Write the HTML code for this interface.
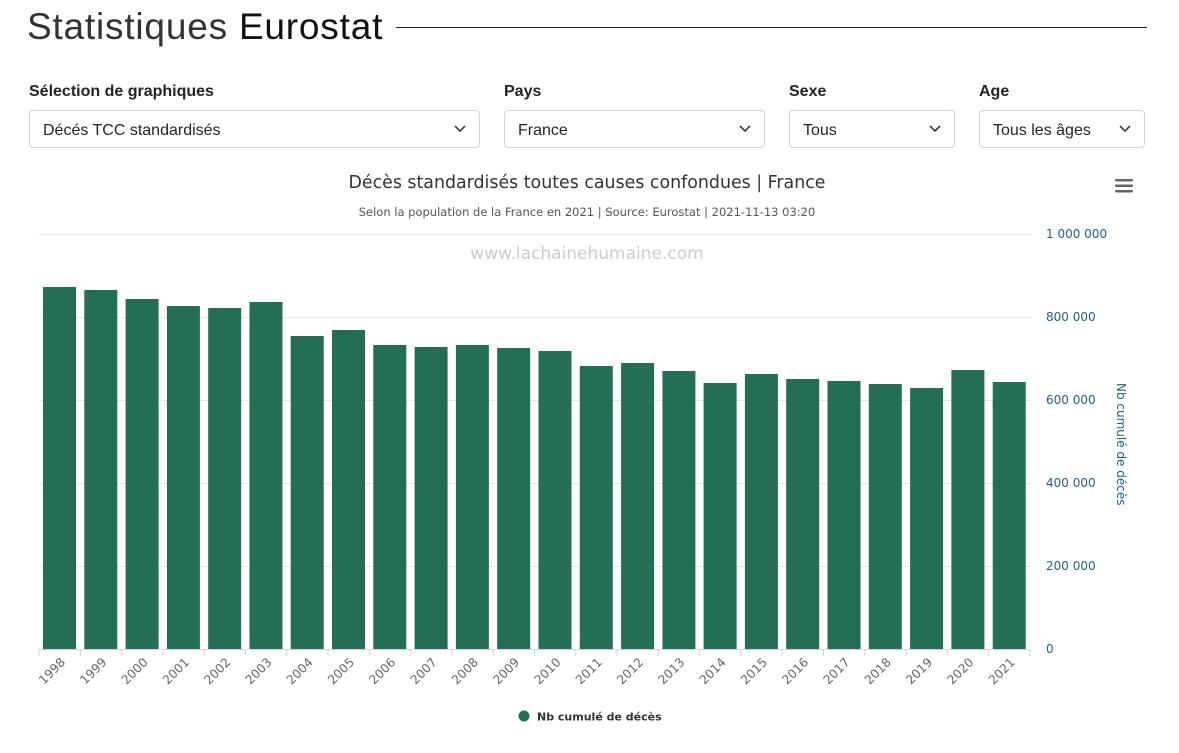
<!DOCTYPE html>
<html><head><meta charset="utf-8"><style>
body{margin:0;width:1179px;height:753px;background:#fff;font-family:"Liberation Sans",sans-serif;position:relative;overflow:hidden}
.h1{position:absolute;left:27px;top:6px;font-size:37px;color:#333;font-weight:300;letter-spacing:0.8px;white-space:nowrap}
.h1 b{font-weight:400;color:#111}
.line{position:absolute;left:396px;top:27px;width:751px;height:1px;background:#222}
.lbl{position:absolute;top:83px;font-size:16px;font-weight:bold;color:#212529}
.sel{position:absolute;top:110px;border:1px solid #ced4da;border-radius:4px;box-sizing:border-box;height:38px;font-size:16px;color:#212529;padding:11px 0 0 13px}
.sel svg{position:absolute;right:13px;top:14px}
</style></head><body>
<div class="h1">Statistiques <b>Eurostat</b></div>
<div class="line"></div>
<div class="lbl" style="left:29px">Sélection de graphiques</div>
<div class="lbl" style="left:504px">Pays</div>
<div class="lbl" style="left:789px">Sexe</div>
<div class="lbl" style="left:979px">Age</div>
<div class="sel" style="left:29px;width:451px">Décés TCC standardisés<svg width="12" height="8"><path d="M1 1l5 5 5-5" stroke="#343a40" stroke-width="1.6" fill="none"/></svg></div>
<div class="sel" style="left:504px;width:261px">France<svg width="12" height="8"><path d="M1 1l5 5 5-5" stroke="#343a40" stroke-width="1.6" fill="none"/></svg></div>
<div class="sel" style="left:789px;width:166px">Tous<svg width="12" height="8"><path d="M1 1l5 5 5-5" stroke="#343a40" stroke-width="1.6" fill="none"/></svg></div>
<div class="sel" style="left:979px;width:166px">Tous les âges<svg width="12" height="8"><path d="M1 1l5 5 5-5" stroke="#343a40" stroke-width="1.6" fill="none"/></svg></div>
<svg width="1179" height="753" style="position:absolute;left:0;top:0" font-family="DejaVu Sans, sans-serif">
<text x="587" y="188" text-anchor="middle" font-size="17.4" fill="#333">Décès standardisés toutes causes confondues | France</text>
<text x="587" y="216" text-anchor="middle" font-size="11.5" fill="#555">Selon la population de la France en 2021 | Source: Eurostat | 2021-11-13 03:20</text>
<g fill="#666"><rect x="1115" y="179" width="18" height="2.5" rx="1"/><rect x="1115" y="184.5" width="18" height="2.5" rx="1"/><rect x="1115" y="190" width="18" height="2.5" rx="1"/></g>
<g stroke="#e6e6e6"><line x1="39" x2="1030" y1="234.5" y2="234.5"/><line x1="39" x2="1030" y1="317.5" y2="317.5"/><line x1="39" x2="1030" y1="400.5" y2="400.5"/><line x1="39" x2="1030" y1="483.5" y2="483.5"/><line x1="39" x2="1030" y1="566.5" y2="566.5"/></g>
<text x="587" y="259" text-anchor="middle" font-size="17" fill="#ccc">www.lachainehumaine.com</text>
<g fill="#236e55">
<rect x="43" y="287" width="33" height="362"/><rect x="84.3" y="290" width="33" height="359"/><rect x="125.6" y="299" width="33" height="350"/><rect x="166.9" y="306" width="33" height="343"/><rect x="208.2" y="308" width="33" height="341"/><rect x="249.5" y="302" width="33" height="347"/><rect x="290.7" y="336" width="33" height="313"/><rect x="332" y="330" width="33" height="319"/><rect x="373.3" y="345" width="33" height="304"/><rect x="414.6" y="347" width="33" height="302"/><rect x="455.9" y="345" width="33" height="304"/><rect x="497.2" y="348" width="33" height="301"/><rect x="538.5" y="351" width="33" height="298"/><rect x="579.8" y="366" width="33" height="283"/><rect x="621.1" y="363" width="33" height="286"/><rect x="662.4" y="371" width="33" height="278"/><rect x="703.6" y="383" width="33" height="266"/><rect x="744.9" y="374" width="33" height="275"/><rect x="786.2" y="379" width="33" height="270"/><rect x="827.5" y="381" width="33" height="268"/><rect x="868.8" y="384" width="33" height="265"/><rect x="910.1" y="388" width="33" height="261"/><rect x="951.4" y="370" width="33" height="279"/><rect x="992.7" y="382" width="33" height="267"/>
</g>
<line x1="39" x2="1030" y1="649.5" y2="649.5" stroke="#ccd6eb"/>
<g stroke="#ccd6eb">
<line x1="39" x2="39" y1="649" y2="656"/><line x1="80.3" x2="80.3" y1="649" y2="656"/><line x1="121.6" x2="121.6" y1="649" y2="656"/><line x1="162.9" x2="162.9" y1="649" y2="656"/><line x1="204.2" x2="204.2" y1="649" y2="656"/><line x1="245.5" x2="245.5" y1="649" y2="656"/><line x1="286.7" x2="286.7" y1="649" y2="656"/><line x1="328" x2="328" y1="649" y2="656"/><line x1="369.3" x2="369.3" y1="649" y2="656"/><line x1="410.6" x2="410.6" y1="649" y2="656"/><line x1="451.9" x2="451.9" y1="649" y2="656"/><line x1="493.2" x2="493.2" y1="649" y2="656"/><line x1="534.5" x2="534.5" y1="649" y2="656"/><line x1="575.8" x2="575.8" y1="649" y2="656"/><line x1="617.1" x2="617.1" y1="649" y2="656"/><line x1="658.4" x2="658.4" y1="649" y2="656"/><line x1="699.6" x2="699.6" y1="649" y2="656"/><line x1="740.9" x2="740.9" y1="649" y2="656"/><line x1="782.2" x2="782.2" y1="649" y2="656"/><line x1="823.5" x2="823.5" y1="649" y2="656"/><line x1="864.8" x2="864.8" y1="649" y2="656"/><line x1="906.1" x2="906.1" y1="649" y2="656"/><line x1="947.4" x2="947.4" y1="649" y2="656"/><line x1="988.7" x2="988.7" y1="649" y2="656"/><line x1="1030" x2="1030" y1="649" y2="656"/>
</g>
<g font-size="12.3" fill="#666" text-anchor="end">
<text transform="translate(66,663) rotate(-45)">1998</text><text transform="translate(107.3,663) rotate(-45)">1999</text><text transform="translate(148.6,663) rotate(-45)">2000</text><text transform="translate(189.9,663) rotate(-45)">2001</text><text transform="translate(231.2,663) rotate(-45)">2002</text><text transform="translate(272.5,663) rotate(-45)">2003</text><text transform="translate(313.7,663) rotate(-45)">2004</text><text transform="translate(355,663) rotate(-45)">2005</text><text transform="translate(396.3,663) rotate(-45)">2006</text><text transform="translate(437.6,663) rotate(-45)">2007</text><text transform="translate(478.9,663) rotate(-45)">2008</text><text transform="translate(520.2,663) rotate(-45)">2009</text><text transform="translate(561.5,663) rotate(-45)">2010</text><text transform="translate(602.8,663) rotate(-45)">2011</text><text transform="translate(644.1,663) rotate(-45)">2012</text><text transform="translate(685.4,663) rotate(-45)">2013</text><text transform="translate(726.6,663) rotate(-45)">2014</text><text transform="translate(767.9,663) rotate(-45)">2015</text><text transform="translate(809.2,663) rotate(-45)">2016</text><text transform="translate(850.5,663) rotate(-45)">2017</text><text transform="translate(891.8,663) rotate(-45)">2018</text><text transform="translate(933.1,663) rotate(-45)">2019</text><text transform="translate(974.4,663) rotate(-45)">2020</text><text transform="translate(1015.7,663) rotate(-45)">2021</text>
</g>
<g font-size="12" fill="#1f5f8f">
<text x="1046" y="238">1 000 000</text><text x="1046" y="321">800 000</text><text x="1046" y="404">600 000</text><text x="1046" y="487">400 000</text><text x="1046" y="570">200 000</text><text x="1046" y="653">0</text>
<text transform="translate(1117,383) rotate(90)" font-size="12">Nb cumulé de décès</text>
</g>
<circle cx="524" cy="716" r="5.5" fill="#236e55"/>
<text x="537" y="720.5" font-size="11" font-weight="bold" fill="#333">Nb cumulé de décès</text>
</svg>
</body></html>
